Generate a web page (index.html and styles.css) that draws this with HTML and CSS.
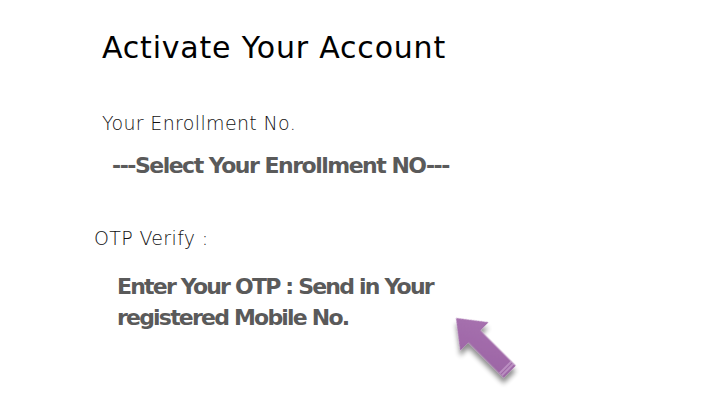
FILE: index.html
```html
<!DOCTYPE html>
<html>
<head>
<meta charset="utf-8">
<link rel="stylesheet" href="styles.css">
</head>
<body>
<main class="slide">
  <h1 class="title">Activate Your Account</h1>
  <p class="label label-enroll">Your Enrollment No.</p>
  <p class="value value-enroll">---Select Your Enrollment NO---</p>
  <p class="label label-otp">OTP Verify :</p>
  <p class="value value-otp">Enter Your OTP : Send in Your<br>registered Mobile No.</p>
  <svg class="arrow" width="90" height="90" viewBox="0 0 90 90">
    <defs>
      <linearGradient id="ag" x1="0" y1="0" x2="1" y2="1">
        <stop offset="0" stop-color="#a873b0"/>
        <stop offset="1" stop-color="#9a62a3"/>
      </linearGradient>
      <filter id="sh" x="-30%" y="-30%" width="160%" height="160%">
        <feGaussianBlur in="SourceAlpha" stdDeviation="2.5"/>
        <feOffset dx="4" dy="4" result="b"/>
        <feComponentTransfer><feFuncA type="linear" slope="0.45"/></feComponentTransfer>
        <feMerge><feMergeNode/><feMergeNode in="SourceGraphic"/></feMerge>
      </filter>
    </defs>
    <g filter="url(#sh)" transform="translate(6 8) rotate(45)">
      <path d="M0 0 L26 -20 L26 -8.5 L76 -8.5 L76 8.5 L26 8.5 L26 20 Z" fill="url(#ag)"/>
      <path d="M70 -8 L70 8 M73 -8 L73 8" stroke="#d6b6db" stroke-width="1"/>
    </g>
  </svg>
</main>
</body>
</html>
```
FILE: styles.css
```css
html, body {
  margin: 0;
  padding: 0;
  background: #fff;
}
.slide {
  position: relative;
  width: 717px;
  height: 407px;
  display: flex;
  flex-direction: column;
  align-items: flex-start;
  font-family: "DejaVu Sans", sans-serif;
  overflow: hidden;
}
.title {
  margin: 28px 0 0 102px;
  font-size: 30px;
  font-weight: normal;
  color: #000;
  line-height: 40px;
  letter-spacing: 0.8px;
  font-family: "DejaVu Sans", sans-serif;
}
.label {
  margin: 0;
  font-size: 19px;
  color: #111;
  line-height: 26px;
  letter-spacing: 0.35px;
  font-weight: 300;
}
.label-enroll {
  margin: 42px 0 0 102px;
}
.value {
  margin: 0;
  font-weight: bold;
  color: #5a5a5a;
}
.value-enroll {
  margin: 16px 0 0 112px;
  font-size: 22px;
  line-height: 28px;
  letter-spacing: -1.5px;
}
.label-otp {
  margin: 45px 0 0 94px;
}
.value-otp {
  margin: 20px 0 0 117px;
  font-size: 22px;
  line-height: 31px;
  letter-spacing: -1.8px;
}
.arrow {
  position: absolute;
  left: 450px;
  top: 310px;
}
```
